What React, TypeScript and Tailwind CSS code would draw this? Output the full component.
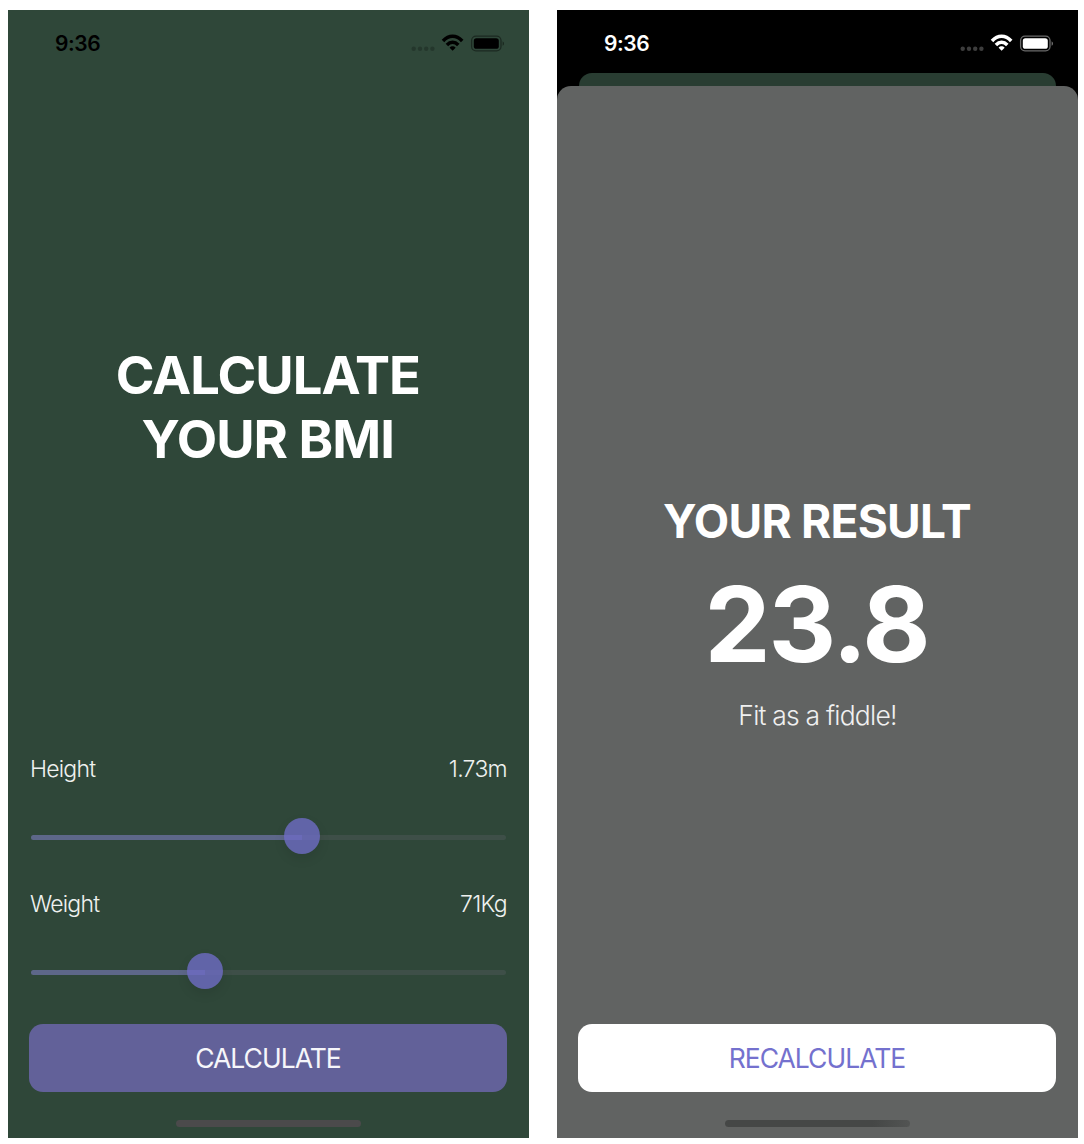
import React from "react";
import clsx from "clsx";

function StatusBar({ light = false }: { light?: boolean }) {
  return (
    <div
      className={clsx(
        "flex h-[63px] shrink-0 items-start justify-between pt-[22px] pr-[24px] pl-[47px]",
        light ? "text-white" : "text-black",
      )}
    >
      <span className="text-[21px] leading-[24px] font-semibold tracking-[-0.4px]">9:36</span>
      <svg width="94" height="24" viewBox="0 0 94 24" fill="none">
        <g fill="currentColor" opacity={light ? 0.24 : 0.22}>
          <circle cx="2.7" cy="16.8" r="2.2" />
          <circle cx="9" cy="16.8" r="2.2" />
          <circle cx="15.2" cy="16.8" r="2.2" />
          <circle cx="21.4" cy="16.8" r="2.2" />
        </g>
        <g stroke="currentColor" strokeWidth="3.5">
          <path d="M32 9 C37.8 2.8 45.4 2.8 51.2 9" />
          <path d="M35.9 13 C39.4 9.4 43.8 9.4 47.3 13" />
        </g>
        <path d="M38.6 15.7 C40.3 13.8 42.9 13.8 44.6 15.7 L41.6 18.8 Z" fill="currentColor" />
        <rect x="60.6" y="4.1" width="29.4" height="14.8" rx="4.4" stroke="currentColor" strokeOpacity="0.42" strokeWidth="1.3" />
        <rect x="62.8" y="6.2" width="25" height="10.6" rx="2.6" fill="currentColor" />
        <path d="M91.6 9.2 C93.5 10 93.5 13 91.6 13.8 Z" fill="currentColor" opacity="0.45" />
      </svg>
    </div>
  );
}

function SliderRow({ label, value, position }: { label: string; value: string; position: number }) {
  return (
    <div className="h-[135px] px-[22px]">
      <div className="flex h-[28px] items-center justify-between text-[23px] leading-[28px] font-light text-[#eef1ef]">
        <span className="tracking-[-0.8px]">{label}</span>
        <span className="tracking-[-0.7px]">{value}</span>
      </div>
      <div className="relative mx-px mt-[51.5px] h-[5px] rounded-full bg-[#3e4f48]">
        <div className="h-full rounded-l-full bg-[#5d6789]" style={{ width: `${position}px` }} />
        <div
          className="absolute top-[-17px] h-[36px] w-[36px] rounded-full bg-[#6e6bc4]/80 shadow-[0_5px_12px_rgba(0,0,0,0.09)]"
          style={{ left: `${position - 18}px` }}
        />
      </div>
    </div>
  );
}

export default function App() {
  return (
    <main className="flex h-[1144px] w-[1084px] gap-[28px] overflow-hidden bg-white pt-[10px] pl-[8px] font-['Inter',sans-serif]">
      <section className="flex h-[1128px] w-[521px] flex-col bg-[#2f4739]">
        <StatusBar />
        <h1 className="mt-[270px] mr-[1.5px] h-[128px] text-center text-[52.5px] leading-[64px] font-bold text-white">
          <span className="block tracking-[-1px]">CALCULATE</span>
          <span className="block tracking-[-1px]">YOUR BMI</span>
        </h1>
        <div className="mt-[284px]">
          <SliderRow label="Height" value="1.73m" position={271.3} />
          <SliderRow label="Weight" value="71Kg" position={174} />
        </div>
        <button className="mt-[-1px] mr-[22px] ml-[21px] h-[68px] shrink-0 rounded-[14px] bg-[#626199] text-[26.5px] leading-[68px] tracking-[-1px] text-[#f6f6fa]">
          CALCULATE
        </button>
        <div className="mx-auto mt-[28px] h-[6.5px] w-[185px] rounded-full bg-[#4b4a4b]" />
      </section>

      <section className="flex h-[1128px] w-[521px] flex-col bg-black">
        <StatusBar light />
        <div className="mx-[22px] h-[13px] shrink-0 rounded-t-[14px] bg-[#293d32]" />
        <div className="flex h-[1052px] flex-col rounded-t-[14px] bg-[#616362] text-center text-white">
          <h2 className="mt-[407px] mr-[1px] text-[46px] leading-[56px] font-bold tracking-[-0.75px]">YOUR RESULT</h2>
          <p className="mt-[13px] mr-[2px] text-[105px] leading-[124px] font-bold tracking-[-2px]">23.8</p>
          <p className="mt-[12.5px] text-[26.5px] leading-[32px] font-light tracking-[-0.8px] text-[#f0f0f0]">Fit as a fiddle!</p>
          <button className="mt-[293.5px] mr-[22px] ml-[21px] h-[68px] shrink-0 rounded-[14px] bg-white text-[26.5px] leading-[68px] tracking-[-1px] text-[#7471ce]">
            RECALCULATE
          </button>
          <div className="mx-auto mt-[28px] h-[6.5px] w-[185px] shrink-0 rounded-full bg-linear-to-r from-[#454746] from-80% to-[#525453]" />
        </div>
      </section>
    </main>
  );
}
